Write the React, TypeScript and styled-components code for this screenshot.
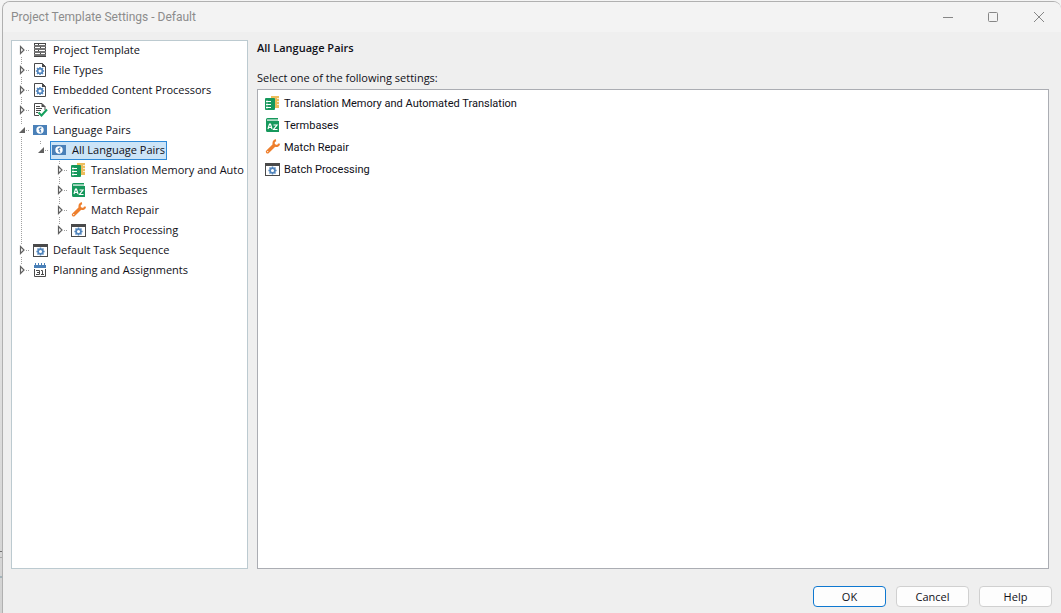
import React from 'react';
import styled, { createGlobalStyle, css } from 'styled-components';

const GlobalStyle = createGlobalStyle`
  * { box-sizing: border-box; }
  body {
    margin: 0;
    background:
      linear-gradient(#707070, #707070) left bottom 61px / 3px 1px no-repeat,
      linear-gradient(#a8a8a8, #a8a8a8) left bottom 55px / 3px 1px no-repeat,
      linear-gradient(#a4b4ba, #a4b4ba) left bottom 35px / 3px 2px no-repeat,
      linear-gradient(#f4f4f4, #e2e2e2 50%, #d2d2d2);
    font-family: 'Open Sans', 'Noto Sans', sans-serif;
    font-size: 11px;
    line-height: 16px;
    color: #101018;
  }
  button { font: inherit; color: inherit; }
`;

const Dialog = styled.main`
  display: flex;
  flex-direction: column;
  min-height: calc(100vh - 1px);
  margin: 1px 0 0 2px;
  background: #efefef;
  border: 1px solid #b0b0b0;
  border-bottom: 0;
  border-right: 0;
  border-radius: 8px 8px 0 0;
  overflow: hidden;
`;

const TitleBar = styled.header`
  display: flex;
  align-items: center;
  justify-content: space-between;
  height: 30px;
  padding-left: 8px;
  background: #f3f3f3;
`;

const Title = styled.h1`
  margin: 0;
  font-family: Roboto, 'Open Sans', sans-serif;
  font-size: 12px;
  font-weight: 400;
  color: #8c8c8c;
`;

const WindowControls = styled.div`
  display: flex;
`;

const ControlButton = styled.button`
  display: grid;
  place-items: center;
  width: 45px;
  height: 30px;
  padding: 0;
  border: 0;
  background: transparent;
  color: #868686;
`;

const Content = styled.div`
  flex: 1;
  display: grid;
  grid-template-columns: 237px minmax(0, 1fr);
  gap: 9px;
  padding: 8px 12px 0 8px;
`;

const TreePanel = styled.nav`
  background: #fff;
  border: 1px solid #bccad0;
  overflow: hidden;
`;

const TreeList = styled.ul`
  margin: 0;
  padding: 0;
  list-style: none;
`;

const TreeRow = styled.div`
  display: flex;
  align-items: flex-start;
  height: 20px;
`;

const dots = (direction: string) =>
  `repeating-linear-gradient(${direction}, #a0a0a0 0 1px, transparent 1px 2px)`;

const Guide = styled.span<{ $line?: boolean }>`
  flex: none;
  width: 19px;
  height: 20px;
  ${(p) => p.$line && css`background: ${dots('to bottom')} 9px 0 / 1px 20px no-repeat;`}
`;

const Toggle = styled.button<{ $above: boolean; $below: boolean }>`
  flex: none;
  width: 19px;
  height: 20px;
  padding: 0;
  border: 0;
  background:
    ${dots('to right')} 14px 9px / 4px 1px no-repeat,
    ${dots('to bottom')} 9px 0 / 1px ${(p) => (p.$above ? 4 : 0)}px no-repeat,
    ${dots('to bottom')} 9px 16px / 1px ${(p) => (p.$below ? 4 : 0)}px no-repeat;
  svg { display: block; }
`;

const TreeLabel = styled.button<{ $selected?: boolean }>`
  display: flex;
  align-items: center;
  gap: 4px;
  height: 19px;
  padding: 0 1px 2px 1px;
  border: 1px solid ${(p) => (p.$selected ? '#2f8ad8' : 'transparent')};
  background: ${(p) => (p.$selected ? '#cce4f7' : 'transparent')};
  white-space: nowrap;
`;

const Pane = styled.section`
  display: flex;
  flex-direction: column;
  min-width: 0;
`;

const PaneTitle = styled.h2`
  margin: 0 0 14px;
  font-size: 11px;
  font-weight: 600;
`;

const PaneHint = styled.p`
  margin: 0 0 3px;
`;

const SettingsList = styled.ul`
  flex: 1;
  margin: 0;
  padding: 2px 7px;
  list-style: none;
  background: #fff;
  border: 1px solid #abadb3;
`;

const SettingButton = styled.button`
  display: flex;
  align-items: center;
  gap: 3px;
  height: 22px;
  padding: 0;
  border: 0;
  background: transparent;
  font-family: Roboto, 'Open Sans', sans-serif;
  line-height: 17px;
`;

const Footer = styled.footer`
  display: flex;
  justify-content: flex-end;
  gap: 10px;
  padding: 17px 9px 6px;
`;

const ActionButton = styled.button<{ $primary?: boolean }>`
  width: 73px;
  height: 21px;
  padding: 0;
  border: 1px solid ${(p) => (p.$primary ? '#0f78d0' : '#d0d0d0')};
  border-radius: 4px;
  background: #fdfdfd;
  line-height: 19px;
`;

const Icon = styled.svg.attrs({ width: 16, height: 16, viewBox: '0 0 16 16', 'aria-hidden': true })`
  flex: none;
  display: block;
`;

const Gear = ({ x, y }: { x: number; y: number }) => (
  <g transform={`translate(${x} ${y})`} stroke="#5285bc" fill="none">
    <path
      d="M0-4.1V4.1M-4.1 0H4.1M-3-3L3 3M-3 3L3-3"
      strokeWidth="1.500"
    />
    <circle r="2.400" fill="#fff" strokeWidth="1.700" />
  </g>
);

const TemplateIcon = () => (
  <Icon>
    <rect x="1" y="1" width="12" height="14" fill="#474747" />
    <path d="M2 2.500h3M6 2.500h6M2 5.500h5M8 5.500h4M2 8.500h3M6 8.500h6M2 11.500h5M8 11.500h4" stroke="#fff" />
    <path d="M1 4h12M1 7h12M1 10h12M1 13h12" stroke="#fff" strokeWidth=".8" opacity=".6" />
  </Icon>
);

const FileGearIcon = () => (
  <Icon>
    <path d="M1.500 1.500h8l3 3v10h-11z" fill="#fff" stroke="#4a4a4a" />
    <path d="M9 1v4h4z" fill="#4a4a4a" />
    <Gear x={7} y={9} />
  </Icon>
);

const VerificationIcon = () => (
  <Icon>
    <path d="M6 13.500H1.500v-12h7.500l3 3V8" fill="none" stroke="#4a4a4a" />
    <path d="M8.500 1v4h4z" fill="#4a4a4a" />
    <path d="M3 4.500h4M3 6.500h6M3 8.500h5M3 10.500h2" stroke="#4a4a4a" />
    <path d="M5.500 10.500l3 3L14 7.500" fill="none" stroke="#16a05d" strokeWidth="2" />
  </Icon>
);

const LanguageIcon = () => (
  <Icon>
    <rect x="0" y="3" width="14" height="10" fill="#4a80b8" />
    <circle cx="7" cy="8" r="3.700" fill="#fff" />
    <path d="M8.400 5.800L6.200 7.200l1.200 1.200-.600.800 1.400 1.200" fill="none" stroke="#4a80b8" strokeWidth="1.200" />
  </Icon>
);

const MemoryIcon = () => (
  <Icon>
    <path d="M6 1h8v12h-5V3H6z" fill="#edbd5c" />
    <path d="M12 3.500h2M12 6.500h2M12 9.500h2" stroke="#fff" strokeWidth=".7" />
    <rect x="0" y="3" width="10" height="12" rx="1" fill="#16985c" />
    <path d="M1 6.500h5M1 9.500h5M1 12.500h5" stroke="#fff" />
    <path d="M2 5v9" stroke="#fff" strokeWidth=".5" />
  </Icon>
);

const TermbaseIcon = () => (
  <Icon>
    <path d="M1 2.500Q1 1 2.500 1H13v1.500H2V4h12v11H2.500Q1 15 1 13.500z" fill="#16985c" />
    <path d="M2 3.200h11" stroke="#8ccbab" />
    <path d="M3 12l1.500-5h1L7 12M3.500 10.500h3M8.500 8H12l-3.500 4.500H12.500" fill="none" stroke="#fff" strokeWidth="1.200" />
  </Icon>
);

const WrenchIcon = () => (
  <Icon fill="none" stroke="#ee7f2d">
    <path d="M2.600 12.700L9 6.500" strokeWidth="3.600" strokeLinecap="round" />
    <path d="M11 1.200C8.600 1.700 7.800 4.400 9.200 6c1.600 1.600 4.500 1.100 4.900-1.400" strokeWidth="2.200" />
    <circle cx="2.700" cy="12.600" r=".7" fill="#fff" stroke="none" />
  </Icon>
);

const WindowGearIcon = () => (
  <Icon>
    <rect x=".5" y="2.500" width="14" height="12" fill="#fff" stroke="#4a4a4a" />
    <rect x="0" y="2" width="15" height="3" fill="#4a4a4a" />
    <Gear x={7.5} y={9.500} />
  </Icon>
);

const CalendarIcon = () => (
  <Icon>
    <rect x="1" y="3" width="12" height="3" fill="#4a80b8" />
    <path d="M2.500 1v3M5.500 1v3M8.500 1v3M11.500 1v3" stroke="#4a80b8" />
    <path d="M1.500 7v7.500h11V7" fill="#fff" stroke="#4a4a4a" />
    <path d="M3 8.500h3.500v4H3M4 10.500h2M8 8.500h1.500v4M8 12.500h3" fill="none" stroke="#4a4a4a" />
  </Icon>
);

const Arrow = ({ open }: { open?: boolean }) => (
  <svg width="19" height="20" viewBox="0 0 19 20" aria-hidden="true">
    {open ? (
      <path d="M13 6v6H7z" fill="#606060" />
    ) : (
      <path d="M8.500 5.500v7L12 9z" fill="#fff" stroke="#606060" strokeWidth="1.200" />
    )}
  </svg>
);

type Node = { label: string; icon: React.FC; children?: Node[]; selected?: boolean };

const pairSettings: Node[] = [
  { label: 'Translation Memory and Automated Translation', icon: MemoryIcon },
  { label: 'Termbases', icon: TermbaseIcon },
  { label: 'Match Repair', icon: WrenchIcon },
  { label: 'Batch Processing', icon: WindowGearIcon },
];

const tree: Node[] = [
  { label: 'Project Template', icon: TemplateIcon },
  { label: 'File Types', icon: FileGearIcon },
  { label: 'Embedded Content Processors', icon: FileGearIcon },
  { label: 'Verification', icon: VerificationIcon },
  {
    label: 'Language Pairs',
    icon: LanguageIcon,
    children: [
      {
        label: 'All Language Pairs',
        icon: LanguageIcon,
        selected: true,
        children: [{ ...pairSettings[0], label: 'Translation Memory and Auto' }, ...pairSettings.slice(1)],
      },
    ],
  },
  { label: 'Default Task Sequence', icon: WindowGearIcon },
  { label: 'Planning and Assignments', icon: CalendarIcon },
];

const Branch = ({ nodes, guides = [] }: { nodes: Node[]; guides?: boolean[] }) => (
  <TreeList role={guides.length ? 'group' : 'tree'}>
    {nodes.map((node, i) => {
      const last = i === nodes.length - 1;
      return (
        <li key={node.label} role="treeitem" aria-expanded={!!node.children} aria-selected={!!node.selected}>
          <TreeRow>
            {guides.map((line, g) => (
              <Guide key={g} $line={line} />
            ))}
            <Toggle aria-label={`Toggle ${node.label}`} $above={i > 0 || guides.length > 0} $below={!last}>
              <Arrow open={!!node.children} />
            </Toggle>
            <TreeLabel $selected={node.selected}>
              <node.icon />
              {node.label}
            </TreeLabel>
          </TreeRow>
          {node.children && <Branch nodes={node.children} guides={[...guides, !last]} />}
        </li>
      );
    })}
  </TreeList>
);

export default function App() {
  return (
    <>
      <GlobalStyle />
      <Dialog>
        <TitleBar>
          <Title>Project Template Settings - Default</Title>
          <WindowControls>
            <ControlButton aria-label="Minimize">
              <svg width="12" height="12" viewBox="0 0 12 12" stroke="currentColor"><path d="M0 6.500h10" /></svg>
            </ControlButton>
            <ControlButton aria-label="Maximize">
              <svg width="12" height="12" viewBox="0 0 12 12" stroke="currentColor" fill="none"><rect x=".5" y="1.500" width="9" height="9" rx="1" /></svg>
            </ControlButton>
            <ControlButton aria-label="Close">
              <svg width="12" height="12" viewBox="0 0 12 12" stroke="currentColor"><path d="M1 1l10 10M11 1L1 11" /></svg>
            </ControlButton>
          </WindowControls>
        </TitleBar>
        <Content>
          <TreePanel aria-label="Settings categories">
            <Branch nodes={tree} />
          </TreePanel>
          <Pane>
            <PaneTitle>All Language Pairs</PaneTitle>
            <PaneHint>Select one of the following settings:</PaneHint>
            <SettingsList>
              {pairSettings.map((s) => (
                <li key={s.label}>
                  <SettingButton>
                    <s.icon />
                    {s.label}
                  </SettingButton>
                </li>
              ))}
            </SettingsList>
          </Pane>
        </Content>
        <Footer>
          <ActionButton $primary>OK</ActionButton>
          <ActionButton>Cancel</ActionButton>
          <ActionButton>Help</ActionButton>
        </Footer>
      </Dialog>
    </>
  );
}
